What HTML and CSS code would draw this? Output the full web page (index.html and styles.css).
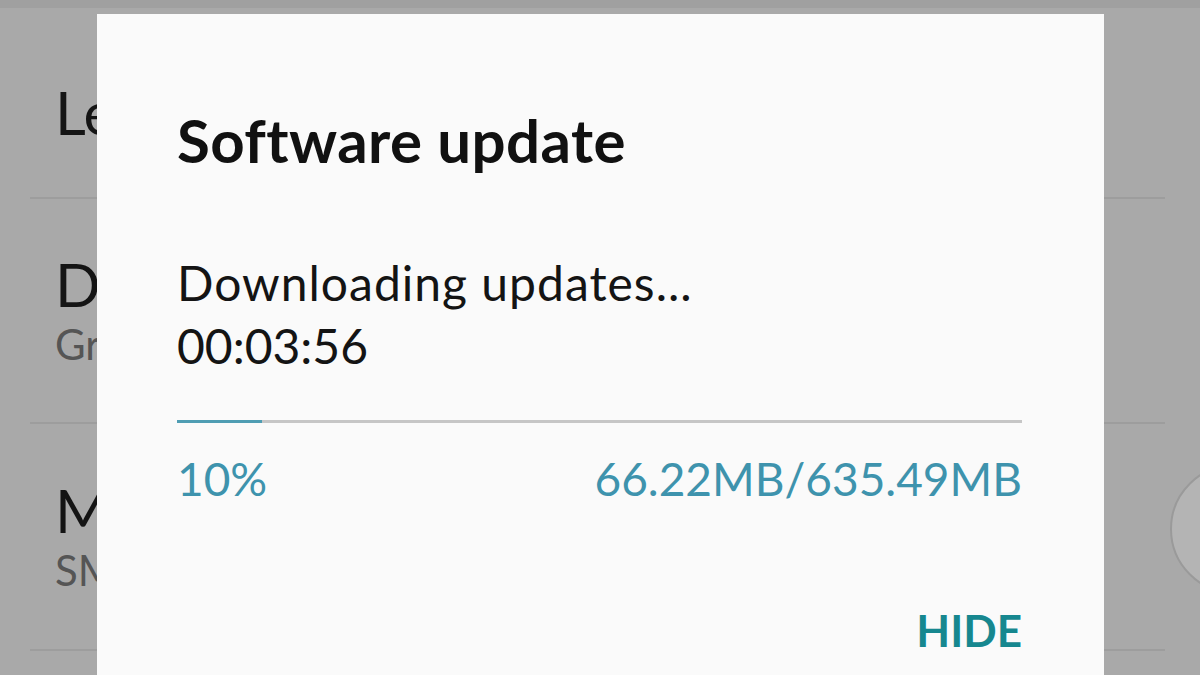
FILE: index.html
```html
<!DOCTYPE html>
<html lang="en">
<head>
<meta charset="utf-8">
<title>Software update</title>
<link rel="stylesheet" href="styles.css">
</head>
<body>
<div class="screen">
  <div class="topbar"></div>
  <ul class="list">
    <li class="item item-first">
      <div class="item-title">Learn more</div>
    </li>
    <li class="item item-second">
      <div class="item-title">Download updates</div>
      <div class="item-sub">Gradually</div>
    </li>
    <li class="item item-third">
      <div class="item-title">Mobile data</div>
      <div class="item-sub">SMS</div>
      <span class="switch"></span>
    </li>
  </ul>

  <div class="dialog">
    <h1 class="dialog-title">Software update</h1>
    <div class="status">
      <div class="status-line">Downloading updates...</div>
      <div class="status-line">00:03:56</div>
    </div>
    <div class="progress"><div class="progress-fill" style="width:10%"></div></div>
    <div class="progress-info">
      <span>10%</span>
      <span>66.22MB/635.49MB</span>
    </div>
    <div class="actions">
      <span class="btn">HIDE</span>
    </div>
  </div>
</div>
</body>
</html>
```

FILE: styles.css
```css
* { box-sizing: border-box; }
html, body {
  margin: 0;
  padding: 0;
  width: 1200px;
  height: 675px;
  overflow: hidden;
  background: #a9a9a9;
  font-family: Lato, "Liberation Sans", sans-serif;
}
.screen {
  position: relative;
  width: 1200px;
  height: 675px;
  overflow: hidden;
  background: #a9a9a9;
}
.topbar {
  height: 8px;
  background: #a0a0a0;
}
.list {
  list-style: none;
  margin: 0;
  padding: 0 35px 0 30px;
}
.item {
  position: relative;
  border-bottom: 2px solid #9d9d9d;
  padding-left: 25px;
  display: flex;
  flex-direction: column;
  justify-content: center;
}
.item-first { height: 191px; padding-top: 18px; }
.item-second { height: 225px; }
.item-third { height: 227px; }
.item-title,
.item-sub {
  max-width: 42px;
  overflow: hidden;
  white-space: nowrap;
}
.item-title {
  font-size: 60px;
  line-height: 66px;
  color: #141414;
}
.item-sub {
  font-size: 42px;
  line-height: 54px;
  color: #555;
}
.switch {
  position: absolute;
  left: 1140px;
  top: 40px;
  width: 130px;
  height: 130px;
  border-radius: 50%;
  background: #b4b4b4;
  border: 2px solid #9a9a9a;
}

.dialog {
  position: absolute;
  left: 97px;
  top: 14px;
  width: 1007px;
  height: 720px;
  background: #fafafa;
  padding: 95px 82px 0 80px;
  display: flex;
  flex-direction: column;
}
.dialog-title {
  margin: 0;
  font-size: 60px;
  line-height: 62px;
  font-weight: 700;
  letter-spacing: 0.4px;
  color: #111;
  white-space: nowrap;
}
.status {
  margin-top: 80px;
}
.status-line {
  font-size: 48px;
  line-height: 63px;
  color: #141414;
  white-space: nowrap;
}
.status-line:first-child {
  letter-spacing: 1px;
}
.progress {
  margin-top: 43px;
  height: 3px;
  background: #c6c6c6;
}
.progress-fill {
  height: 100%;
  background: #4f9db3;
}
.progress-info {
  margin-top: 26px;
  display: flex;
  justify-content: space-between;
  font-size: 46px;
  line-height: 60px;
  color: #3e93ad;
}
.actions {
  margin-top: 91px;
  display: flex;
  justify-content: flex-end;
}
.btn {
  font-size: 44px;
  line-height: 60px;
  font-weight: 700;
  color: #16878f;
}
```
